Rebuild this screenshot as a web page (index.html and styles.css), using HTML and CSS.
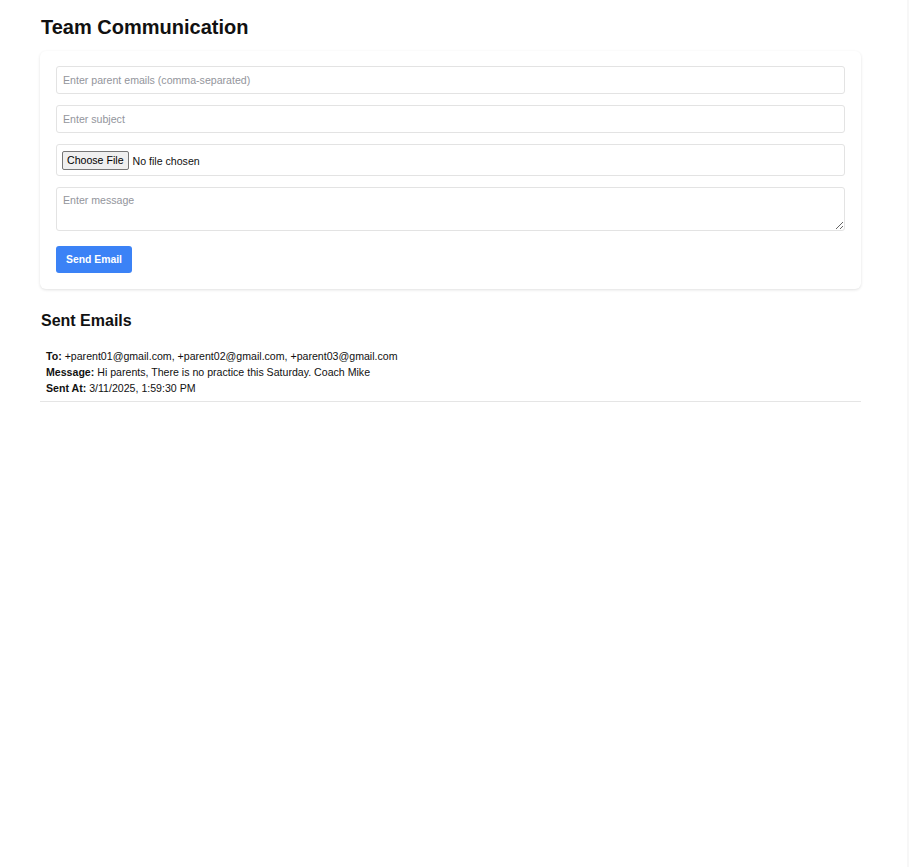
FILE: index.html
```html
<!DOCTYPE html>
<html>
<head>
<meta charset="utf-8">
<link rel="stylesheet" href="styles.css">
</head>
<body>
<div class="page">
  <h1 class="title">Team Communication</h1>
  <div class="card">
    <input class="field" type="text" placeholder="Enter parent emails (comma-separated)">
    <input class="field" type="text" placeholder="Enter subject">
    <div class="file-box"><input class="file" type="file"></div>
    <textarea class="field area" placeholder="Enter message"></textarea>
    <div><button class="send">Send Email</button></div>
  </div>
  <h2 class="subtitle">Sent Emails</h2>
  <div class="item">
    <div><b>To:</b> +parent01@gmail.com, +parent02@gmail.com, +parent03@gmail.com</div>
    <div><b>Message:</b> Hi parents, There is no practice this Saturday. Coach Mike</div>
    <div><b>Sent At:</b> 3/11/2025, 1:59:30 PM</div>
  </div>
</div>
</body>
</html>
```
FILE: styles.css
```css
html, body {
  margin: 0;
  background: #fff;
}
body {
  font-family: "Liberation Sans", Arial, sans-serif;
  color: #111;
  border-right: 2px solid #f7f7f7;
  min-height: 867px;
  box-sizing: border-box;
}
.page {
  width: 821px;
  margin-left: 40px;
  padding-top: 15px;
}
.title {
  font-size: 20px;
  font-weight: bold;
  margin: 0;
  line-height: 24px;
  color: #111;
  padding-left: 1px;
}
.card {
  margin-top: 12px;
  background: #fff;
  border-radius: 6px;
  box-shadow: 0 1px 3px rgba(0,0,0,0.12);
  padding: 15px 16px 16px;
  display: flex;
  flex-direction: column;
  gap: 11px;
}
.field {
  font-family: "Liberation Sans", Arial, sans-serif;
  font-size: 10.6px;
  height: 28px;
  box-sizing: border-box;
  border: 1px solid #e3e3e3;
  border-radius: 3px;
  padding: 6px;
  color: #111;
  outline: none;
  width: 100%;
}
.field::placeholder {
  color: #93959c;
}
.file-box {
  height: 32px;
  box-sizing: border-box;
  border: 1px solid #e3e3e3;
  border-radius: 3px;
  padding: 5px 5px;
  display: flex;
  align-items: center;
}
.file {
  font-family: "Liberation Sans", Arial, sans-serif;
  font-size: 10.6px;
}
.file::file-selector-button {
  font-family: "Liberation Sans", Arial, sans-serif;
  font-size: 10.6px;
  padding: 1px 4px;
  margin-right: 4px;
  border: 1px solid #767676;
  border-radius: 2px;
  background: #efefef;
  color: #000;
  height: 19px;
}
.area {
  height: 44px;
  resize: vertical;
  display: block;
}
.send {
  margin-top: 4px;
  background: #3b82f6;
  color: #fff;
  border: none;
  border-radius: 3px;
  font-family: "Liberation Sans", Arial, sans-serif;
  font-size: 10.4px;
  font-weight: bold;
  height: 27px;
  width: 76px;
  padding: 0;
}
.subtitle {
  font-size: 16px;
  font-weight: bold;
  margin: 22px 0 0;
  line-height: 20px;
  color: #111;
  padding-left: 1px;
}
.item {
  margin-top: 14px;
  padding: 3px 6px 5px;
  font-size: 10.6px;
  line-height: 16px;
  border-bottom: 1px solid #e5e5e5;
  color: #111;
}
```
